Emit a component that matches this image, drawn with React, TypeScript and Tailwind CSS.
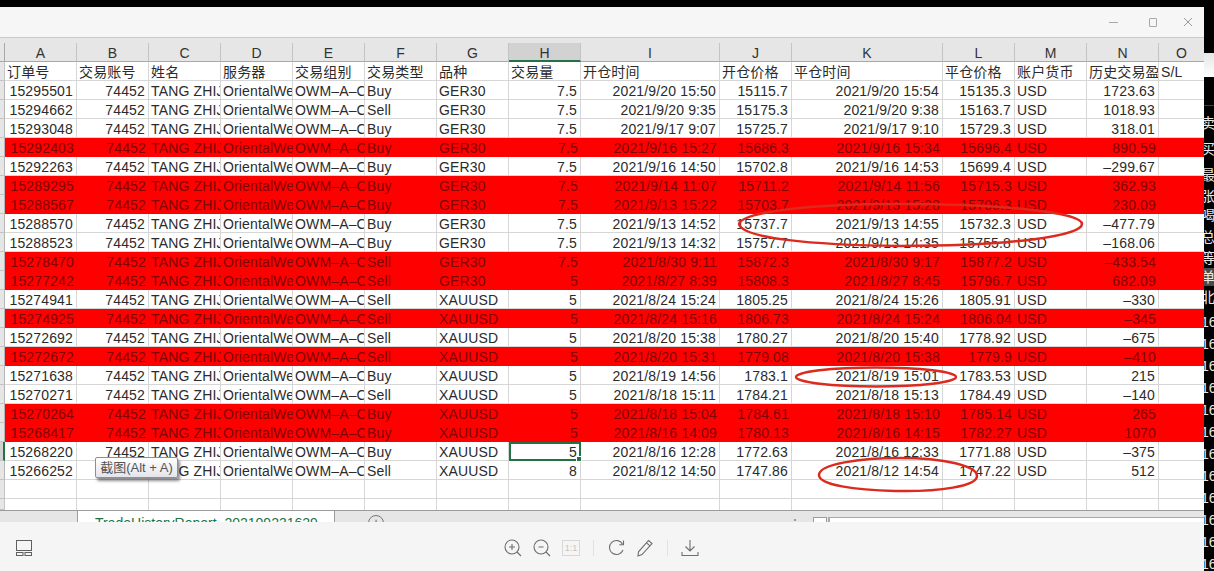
import React from "react";

const font = "font-['Liberation_Sans','Noto_Sans_CJK_SC',sans-serif]";
const gridCols =
  "grid grid-cols-[72px_72px_72px_72px_72px_72px_72px_72px_139px_72px_151px_72px_72px_72px_45px]";

const letters = ["A", "B", "C", "D", "E", "F", "G", "H", "I", "J", "K", "L", "M", "N", "O"];
const headers = [
  "订单号",
  "交易账号",
  "姓名",
  "服务器",
  "交易组别",
  "交易类型",
  "品种",
  "交易量",
  "开仓时间",
  "开仓价格",
  "平仓时间",
  "平仓价格",
  "账户货币",
  "历史交易盈亏",
  "S/L",
];

// order, side, symbol, volume, open time, open price, close time, close price, profit, red
type Trade = [string, string, string, string, string, string, string, string, string, boolean];

const trades: Trade[] = [
  ["15295501", "Buy", "GER30", "7.5", "2021/9/20 15:50", "15115.7", "2021/9/20 15:54", "15135.3", "1723.63", false],
  ["15294662", "Sell", "GER30", "7.5", "2021/9/20 9:35", "15175.3", "2021/9/20 9:38", "15163.7", "1018.93", false],
  ["15293048", "Buy", "GER30", "7.5", "2021/9/17 9:07", "15725.7", "2021/9/17 9:10", "15729.3", "318.01", false],
  ["15292403", "Buy", "GER30", "7.5", "2021/9/16 15:27", "15686.3", "2021/9/16 15:34", "15696.4", "890.59", true],
  ["15292263", "Buy", "GER30", "7.5", "2021/9/16 14:50", "15702.8", "2021/9/16 14:53", "15699.4", "–299.67", false],
  ["15289295", "Buy", "GER30", "7.5", "2021/9/14 11:07", "15711.2", "2021/9/14 11:56", "15715.3", "362.93", true],
  ["15288567", "Buy", "GER30", "7.5", "2021/9/13 15:22", "15703.7", "2021/9/13 15:28", "15706.3", "230.09", true],
  ["15288570", "Buy", "GER30", "7.5", "2021/9/13 14:52", "15737.7", "2021/9/13 14:55", "15732.3", "–477.79", false],
  ["15288523", "Buy", "GER30", "7.5", "2021/9/13 14:32", "15757.7", "2021/9/13 14:35", "15755.8", "–168.06", false],
  ["15278470", "Sell", "GER30", "7.5", "2021/8/30 9:11", "15872.3", "2021/8/30 9:17", "15877.2", "–433.54", true],
  ["15277242", "Sell", "GER30", "5", "2021/8/27 8:39", "15808.3", "2021/8/27 8:45", "15796.7", "682.09", true],
  ["15274941", "Sell", "XAUUSD", "5", "2021/8/24 15:24", "1805.25", "2021/8/24 15:26", "1805.91", "–330", false],
  ["15274925", "Sell", "XAUUSD", "5", "2021/8/24 15:16", "1806.73", "2021/8/24 15:24", "1806.04", "–345", true],
  ["15272692", "Sell", "XAUUSD", "5", "2021/8/20 15:38", "1780.27", "2021/8/20 15:40", "1778.92", "–675", false],
  ["15272672", "Sell", "XAUUSD", "5", "2021/8/20 15:31", "1779.08", "2021/8/20 15:38", "1779.9", "–410", true],
  ["15271638", "Buy", "XAUUSD", "5", "2021/8/19 14:56", "1783.1", "2021/8/19 15:01", "1783.53", "215", false],
  ["15270271", "Sell", "XAUUSD", "5", "2021/8/18 15:11", "1784.21", "2021/8/18 15:13", "1784.49", "–140", false],
  ["15270264", "Buy", "XAUUSD", "5", "2021/8/18 15:04", "1784.61", "2021/8/18 15:10", "1785.14", "265", true],
  ["15268417", "Buy", "XAUUSD", "5", "2021/8/16 14:09", "1780.13", "2021/8/16 14:15", "1782.27", "1070", true],
  ["15268220", "Buy", "XAUUSD", "5", "2021/8/16 12:28", "1772.63", "2021/8/16 12:33", "1771.88", "–375", false],
  ["15266252", "Sell", "XAUUSD", "8", "2021/8/12 14:50", "1747.86", "2021/8/12 14:54", "1747.22", "512", false],
];

function Cell({
  text,
  right,
  red,
  last,
  selected,
}: {
  text?: string;
  right?: boolean;
  red?: boolean;
  last?: boolean;
  selected?: boolean;
}) {
  return (
    <div
      className={`relative h-[19px] whitespace-nowrap text-[14px] leading-[21px] tracking-[0.15px] ${
        selected ? "z-10 outline-2 -outline-offset-2 outline-[#217346]" : "overflow-hidden"
      } ${right ? "pr-[3px] text-right" : "pl-[2px] text-left"} ${
        red ? "text-[#800404]" : "border-b border-[#d6d6d6] text-[#2b2b2b]"
      } ${red || last ? "" : "border-r"}`}
    >
      {text}
      {selected && (
        <div className="absolute -bottom-[2px] -right-[2px] h-[6px] w-[6px] border border-white bg-[#217346]" />
      )}
    </div>
  );
}

function TradeRow({ trade, selected }: { trade: Trade; selected?: boolean }) {
  const [order, side, symbol, vol, openT, openP, closeT, closeP, profit, red] = trade;
  return (
    <div className="flex">
      <div
        className={`h-[19px] w-[5px] border-b border-r border-b-[#c4c4c4] ${
          selected ? "border-r-2 border-r-[#217346] bg-[#d2d2d2]" : "border-r-[#b5b5b5] bg-[#e6e6e6]"
        }`}
      />
      <div className={`${gridCols} ${red ? "bg-[#ff0000]" : "bg-white"}`}>
        <Cell text={order} right red={red} />
        <Cell text="74452" right red={red} />
        <Cell text="TANG ZHIJIAN" red={red} />
        <Cell text="OrientalWealth" red={red} />
        <Cell text="OWM–A–CNY" red={red} />
        <Cell text={side} red={red} />
        <Cell text={symbol} red={red} />
        <Cell text={vol} right red={red} selected={selected} />
        <Cell text={openT} right red={red} />
        <Cell text={openP} right red={red} />
        <Cell text={closeT} right red={red} />
        <Cell text={closeP} right red={red} />
        <Cell text="USD" red={red} />
        <Cell text={profit} right red={red} />
        <Cell red={red} last />
      </div>
    </div>
  );
}

function EmptyRow({ short }: { short?: boolean }) {
  const h = short ? "h-[11px]" : "h-[19px]";
  return (
    <div className="flex">
      <div className={`${h} w-[5px] border-b border-r border-[#c4c4c4] bg-[#e6e6e6]`} />
      <div className={`${gridCols} bg-white`}>
        {letters.map((l, i) => (
          <div key={l} className={`${h} border-[#d6d6d6] ${short ? "" : "border-b"} ${i < 14 ? "border-r" : ""}`} />
        ))}
      </div>
    </div>
  );
}

function RightStrip() {
  const glyphs: [string, string][] = [
    ["卖", "mt-[3px] h-[27px]"],
    ["买", "h-[26px]"],
    ["最", "h-[26px]"],
    ["张", "h-[16px]"],
    ["喝", "h-[22px]"],
    ["总", "h-[22px]"],
    ["等", "h-[20px]"],
    ["单", "h-[18px] bg-[#4a4a4a]"],
    ["北", "h-[22px] text-[#8a8a8a]"],
  ];
  return (
    <div className={`flex w-[10px] flex-col overflow-hidden bg-black ${font}`}>
      <div className="mt-[53px] h-[24px] shrink-0 bg-gradient-to-b from-[#e6e6e6] to-[#ffffff]" />
      <div className="mt-[28px] h-px shrink-0 bg-[#8a1c1c]" />
      {glyphs.map(([g, cls]) => (
        <div key={g} className={`flex shrink-0 items-center text-[14px] leading-none text-[#e8e8e8] ${cls}`}>
          <span className="-ml-[3px]">{g}</span>
        </div>
      ))}
      <div className="mt-[3px]" />
      {Array.from({ length: 12 }).map((_, i) => (
        <div key={i} className="-ml-[3px] h-[22px] shrink-0 text-[14px] leading-[22px] text-[#e8e8e8]">
          16
        </div>
      ))}
    </div>
  );
}

function ToolIcon({ children, w = 18 }: { children: React.ReactNode; w?: number }) {
  return (
    <svg width={w} height="18" viewBox={`0 0 ${w} 18`} fill="none" stroke="#6e6e6e" strokeWidth="1.1">
      {children}
    </svg>
  );
}

function Toolbar() {
  return (
    <div className="flex h-[49px] items-center bg-[#f5f5f5] pl-[16px] pt-[3px]">
      <svg width="16" height="16" viewBox="0 0 16 16" fill="none" stroke="#5f5f5f" strokeWidth="1">
        <rect x="0.5" y="0.5" width="15" height="10" />
        <rect x="0.5" y="12.5" width="6.5" height="3" />
        <rect x="9" y="12.5" width="6.5" height="3" />
      </svg>
      <div className="ml-[472px] flex items-center">
        <ToolIcon>
          <circle cx="8" cy="8" r="7" />
          <path d="M13 13l4 4M5 8h6M8 5v6" />
        </ToolIcon>
        <div className="ml-[11px]">
          <ToolIcon>
            <circle cx="8" cy="8" r="7" />
            <path d="M13 13l4 4M5.5 8h5" />
          </ToolIcon>
        </div>
        <div className="ml-[11px] flex h-[16px] w-[18px] items-center justify-center border border-[#d8d8d8] text-[9px] leading-none text-[#c4c4c4]">
          1:1
        </div>
        <div className="ml-[13px] h-[16px] w-px bg-[#e2e2e2]" />
        <div className="ml-[14px]">
          <ToolIcon>
            <path d="M14.6 5.2A7 7 0 1 0 15 11" />
            <path d="M15.5 1.5v4.2h-4.2" />
          </ToolIcon>
        </div>
        <div className="ml-[10px]">
          <ToolIcon>
            <path d="M12.5 1.5l3.5 3L6 15.5l-4 1.5 .5-4.2z" />
            <path d="M10.5 3.8l3.5 3" />
          </ToolIcon>
        </div>
        <div className="ml-[13px] h-[16px] w-px bg-[#e2e2e2]" />
        <div className="ml-[13px]">
          <ToolIcon>
            <path d="M9 1v11M4.5 7.5L9 12l4.5-4.5M1 13v3.5h16V13" />
          </ToolIcon>
        </div>
      </div>
    </div>
  );
}

export default function App() {
  return (
    <div className={`relative flex h-[571px] w-[1214px] overflow-hidden bg-black ${font}`}>
      <div className="mt-[7px] flex w-[1204px] flex-col">
        {/* title bar */}
        <div className="flex h-[31px] items-center justify-end border-b border-[#c9c9c9] bg-[#f6f6f6] pr-[11px]">
          <div className="h-px w-[9px] bg-[#a8a8a8]" />
          <div className="ml-[31px] h-[9px] w-[8px] rounded-[1px] border border-[#a8a8a8]" />
          <svg className="ml-[26px]" width="10" height="10" viewBox="0 0 10 10" stroke="#9a9a9a" strokeWidth="1">
            <path d="M1 1l8 8M9 1l-8 8" />
          </svg>
        </div>

        {/* column letters */}
        <div className="flex h-[24px] bg-[#e6e6e6] pt-[5px]">
          <div className="w-[5px] border-b border-r border-[#a8a8a8]" />
          <div className={gridCols}>
            {letters.map((l, i) => (
              <div
                key={l}
                className={`h-[19px] border-b text-center text-[14px] leading-[21px] text-[#333] ${
                  l === "H"
                    ? "border-b-2 border-b-[#217346] bg-[#d2d2d2]"
                    : "border-b-[#a8a8a8]"
                } ${i < 14 ? "border-r border-r-[#c4c4c4]" : ""}`}
              >
                {l}
              </div>
            ))}
          </div>
        </div>

        {/* header row */}
        <div className="flex">
          <div className="h-[19px] w-[5px] border-b border-r border-[#c4c4c4] bg-[#e6e6e6]" />
          <div className={`${gridCols} bg-white`}>
            {headers.map((h, i) => (
              <Cell key={h} text={h} last={i === 14} />
            ))}
          </div>
        </div>

        {trades.map((t) => (
          <TradeRow key={t[0]} trade={t} selected={t[0] === "15268220"} />
        ))}
        <EmptyRow />
        <EmptyRow short />

        {/* sheet tabs, cut off by the viewer toolbar */}
        <div className="flex h-[12px] overflow-hidden border-t border-[#9c9c9c] bg-[#e6e6e6]">
          <div className="w-[77px]" />
          <div className="relative -top-px h-[24px] w-[258px] border-x border-[#9c9c9c] bg-white pl-[17px] pt-[4px] text-[14px] leading-[18px] text-[#217346]">
            TradeHistoryReport_202109231629
          </div>
          <div className="ml-[33px] mt-[4px] h-[16px] w-[16px] rounded-full border border-[#777] text-center text-[12px] leading-[14px] text-[#555]">
            +
          </div>
          <div className="ml-[410px] mt-[8px] h-[2px] w-[2px] bg-[#9a9a9a]" />
          <div className="ml-[17px] mt-[6px] h-[16px] w-[14px] border border-[#9c9c9c] bg-white" />
          <div className="ml-px mt-[6px] h-[16px] flex-1 border-l-2 border-t border-[#aaaaaa] bg-white" />
        </div>

        <Toolbar />
      </div>

      <RightStrip />

      {/* hand drawn red rings over the sheet */}
      <svg className="pointer-events-none absolute left-0 top-0" width="1214" height="571" fill="none" stroke="#dc2a1e" strokeWidth="2.5">
        <path d="M739 224C742 213 800 204 900 204C1000 204 1082 212 1082 224C1082 236 1010 246 900 246C810 245 742 238 739 224Z" />
        <ellipse cx="876" cy="377" rx="80" ry="9.5" />
        <path d="M819 475C819 464 860 458 900 458C945 458 977 466 977 476C977 486 940 492 895 491C855 490 819 485 819 475Z" />
      </svg>

      {/* screenshot tool tooltip */}
      <div className="absolute left-[95px] top-[457px] flex h-[21px] w-[83px] items-center justify-center rounded-[2px] border border-[#8f8f8f] bg-gradient-to-b from-white to-[#e4e4ec] text-[13px] text-[#555] shadow-[2px_3px_3px_rgba(0,0,0,0.45)]">
        截图(Alt + A)
      </div>
    </div>
  );
}
